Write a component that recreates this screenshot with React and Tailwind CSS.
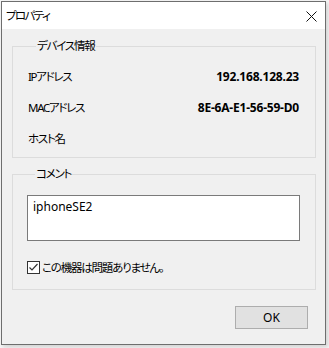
import { useState } from 'react'

const font = { fontFamily: '"Noto Sans", "Noto Sans CJK JP", sans-serif', fontFeatureSettings: '"palt"' }

const rows = [
  { label: 'IPアドレス', value: '192.168.128.23' },
  { label: 'MACアドレス', value: '8E-6A-E1-56-59-D0' },
  { label: 'ホスト名', value: '' },
]

export default function App() {
  const [checked, setChecked] = useState(true)

  return (
    <div className="w-[329px] h-[348px] bg-[#f5f5f5] pl-[1px] pt-[1px] overflow-hidden" style={font}>
      {/* ウィンドウ */}
      <div className="w-[325px] h-[344px] border border-[#6e6e6e] flex flex-col bg-[#f0f0f0] shadow-[2px_2px_4px_rgba(0,0,0,0.15)] text-[12px] text-black">

        {/* タイトルバー */}
        <div className="h-[27px] bg-white flex items-center justify-between pl-[4px] pr-[8px]">
          <span className="leading-[16px] text-[11.5px] tracking-[-1.6px]">プロパティ</span>
          <svg width="11" height="11" viewBox="0 0 11 11" className="mt-[1px]">
            <path d="M0.5 0.5 L10.5 10.5 M10.5 0.5 L0.5 10.5" stroke="#111" strokeWidth="1" fill="none" />
          </svg>
        </div>

        <div className="flex-1 flex flex-col pl-[10px] pr-[9px] pt-[9px]">

          {/* デバイス情報 */}
          <fieldset className="border border-[#dcdcdc] pl-[15px] pr-[16px] pt-[7px] pb-[3px]">
            <legend className="ml-[8px] px-[1px] leading-[16px] text-[11.5px] tracking-[-1.2px]">デバイス情報</legend>
            {rows.map(row => (
              <div key={row.label} className="h-[31px] flex items-center justify-between">
                <span className="text-[11.5px] tracking-[-1.3px]">{row.label}</span>
                <span className="font-bold tracking-[-0.2px]">{row.value}</span>
              </div>
            ))}
          </fieldset>

          {/* コメント */}
          <fieldset className="mt-[8px] border border-[#dcdcdc] pl-[14px] pr-[15px] pt-[13px] pb-[15px]">
            <legend className="ml-[8px] px-[1px] leading-[16px] text-[11.5px] tracking-[-1.2px]">コメント</legend>
            <div className="h-[46px] bg-white border border-[#7a7a7a] pl-[5px] pt-[3px] leading-[16px]">
              iphoneSE2
            </div>
            <label className="mt-[20px] flex items-center gap-[2px] leading-[13px]">
              <span
                className="w-[13px] h-[13px] border border-[#333] bg-white flex items-center justify-center"
                onClick={() => setChecked(!checked)}
              >
                {checked && (
                  <svg width="11" height="11" viewBox="0 0 11 11">
                    <path d="M1.5 5.5 L4 8 L9.5 2" stroke="#333" strokeWidth="1.2" fill="none" />
                  </svg>
                )}
              </span>
              <span className="text-[11.5px] tracking-[-1.2px]">この機器は問題ありません。</span>
            </label>
          </fieldset>

          {/* ボタン */}
          <div className="flex justify-end mt-[16px] pr-[8px]">
            <button className="w-[73px] h-[23px] bg-[#e1e1e1] border border-[#adadad] leading-[16px]">OK</button>
          </div>
        </div>
      </div>
    </div>
  )
}
